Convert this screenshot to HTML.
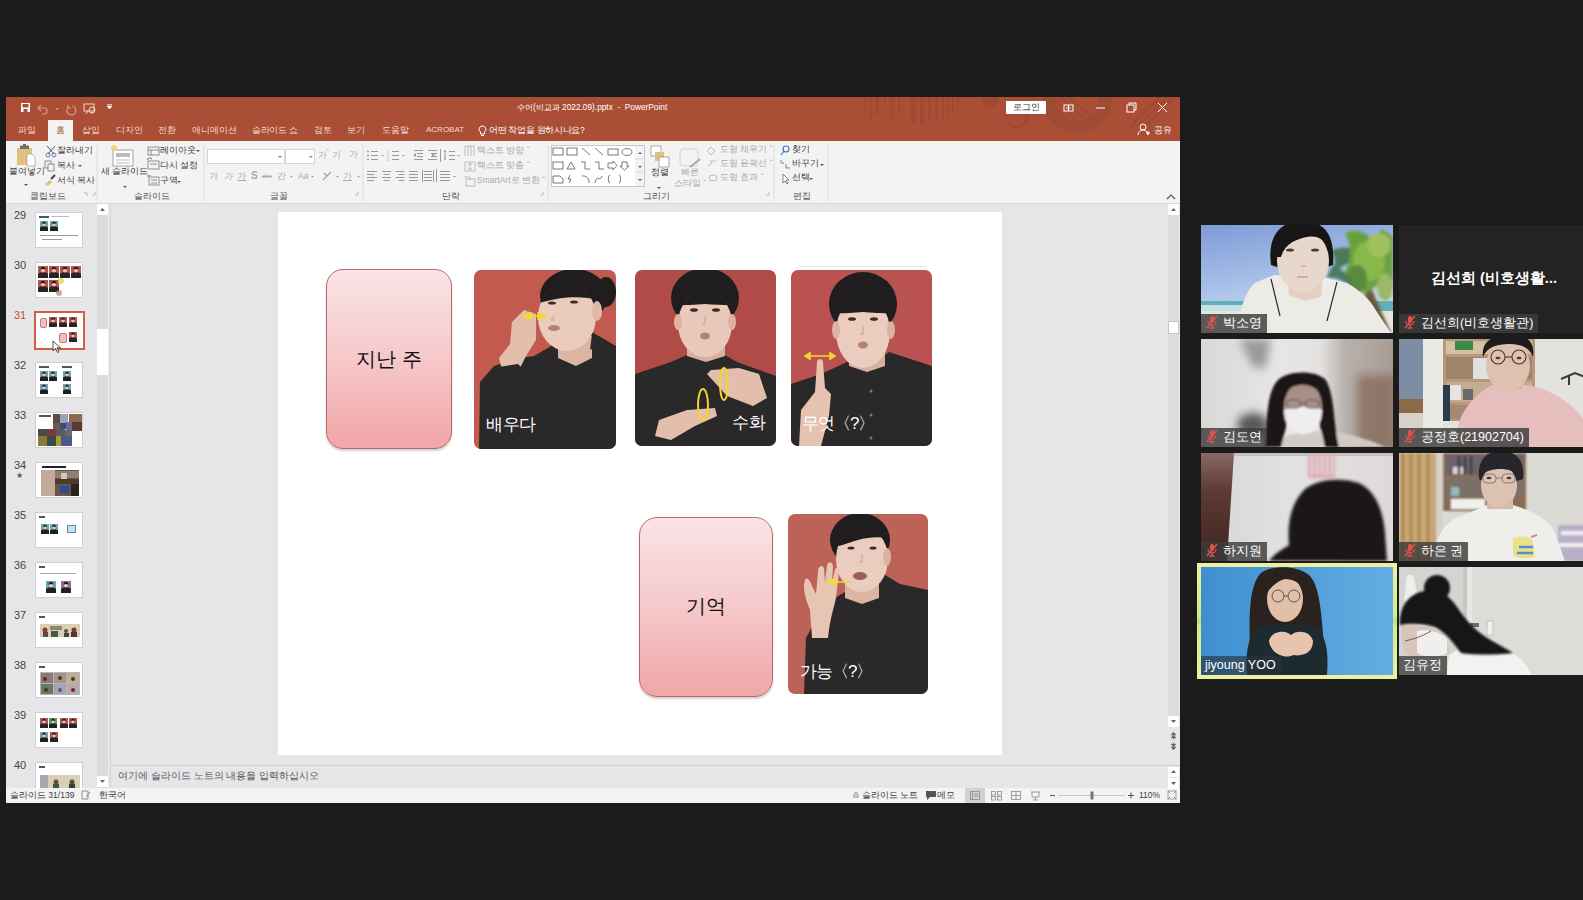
<!DOCTYPE html>
<html><head><meta charset="utf-8">
<style>
*{margin:0;padding:0;box-sizing:border-box}
html,body{width:1583px;height:900px;overflow:hidden;background:#1b1b1b;font-family:"Liberation Sans",sans-serif;position:relative}
.a{position:absolute}
.w{white-space:nowrap}
.tt{color:#fff;font-size:8.5px;line-height:12px}
.tab{color:#f5d9d0;font-size:8.5px;line-height:12px;top:124px}
.rt{color:#3c3c3c;font-size:8.5px;line-height:11px}
.rg{color:#a9a9a9;font-size:8.5px;line-height:11px}
.lbl{color:#505050;font-size:8.5px;line-height:11px;top:191px}
.sep{top:145px;width:1px;height:55px;background:#dadada}
.tn{color:#444;font-size:11px;line-height:12px}
.th{left:35px;width:48px;height:36px;background:#fff;border:1px solid #d0d0d0;overflow:hidden}
.st{color:#3c3c3c;font-size:8.5px;line-height:12px;top:789px}
.tile{width:192px;height:108px;overflow:hidden}
.nm{position:absolute;left:0;bottom:0;height:19px;background:rgba(48,48,48,.8);color:#fff;font-size:12.5px;line-height:19px;white-space:nowrap;padding:0 5px 0 4px}
.mic{display:inline-block;width:14px;height:14px;vertical-align:-2px;margin-right:4px}
</style></head><body>
<svg width="0" height="0" style="position:absolute">
  <symbol id="mpr" viewBox="0 0 16 20" preserveAspectRatio="none"><rect width="16" height="20" fill="#b9524e"/><path d="M0 20 V13 L5 10.5 H11 L16 13 V20Z" fill="#262424"/><ellipse cx="8" cy="7" rx="3.4" ry="4" fill="#e6c4b4"/><path d="M4.4 6.5 C4 2 6 1.5 8 1.5 C10 1.5 12 2 11.6 6.5 C10 4.5 6 4.5 4.4 6.5Z" fill="#1f1d1d"/></symbol>
  <symbol id="mpb" viewBox="0 0 16 20" preserveAspectRatio="none"><rect width="16" height="20" fill="#6aa6b8"/><path d="M0 20 V13 L5 10.5 H11 L16 13 V20Z" fill="#1e2022"/><ellipse cx="8" cy="7" rx="3.4" ry="4" fill="#e6c4b4"/><path d="M4.4 6.5 C4 2 6 1.5 8 1.5 C10 1.5 12 2 11.6 6.5 C10 4.5 6 4.5 4.4 6.5Z" fill="#1f1d1d"/></symbol>
  <symbol id="mpg" viewBox="0 0 16 20" preserveAspectRatio="none"><rect width="16" height="20" fill="#5a9a5a"/><path d="M0 20 V13 L5 10.5 H11 L16 13 V20Z" fill="#1e2022"/><ellipse cx="8" cy="7" rx="3.4" ry="4" fill="#e6c4b4"/><path d="M4.4 6.5 C4 2 6 1.5 8 1.5 C10 1.5 12 2 11.6 6.5 C10 4.5 6 4.5 4.4 6.5Z" fill="#1f1d1d"/></symbol>
  <symbol id="mpp" viewBox="0 0 16 20" preserveAspectRatio="none"><rect width="16" height="20" fill="#8a70a8"/><path d="M0 20 V13 L5 10.5 H11 L16 13 V20Z" fill="#1e2022"/><ellipse cx="8" cy="7" rx="3.4" ry="4" fill="#e6c4b4"/><path d="M4.4 6.5 C4 2 6 1.5 8 1.5 C10 1.5 12 2 11.6 6.5 C10 4.5 6 4.5 4.4 6.5Z" fill="#1f1d1d"/></symbol>
</svg>

<!-- PowerPoint window -->
<div class="a" style="left:6px;top:97px;width:1174px;height:706px;background:#e6e6e8"></div>
<div class="a" id="titlebar" style="left:6px;top:97px;width:1174px;height:44px;background:#aa4f36;overflow:hidden">
  <svg class="a" style="left:0;top:0" width="1174" height="44">
    <g fill="#9f4a33" opacity="0.9">
      <rect x="858" y="0" width="3" height="14"/><rect x="864" y="0" width="2" height="22"/><rect x="870" y="0" width="3" height="18"/>
      <rect x="878" y="0" width="2" height="10"/><rect x="884" y="0" width="3" height="24"/><rect x="892" y="0" width="2" height="16"/>
      <rect x="905" y="0" width="5" height="26"/><rect x="914" y="0" width="4" height="28"/><rect x="922" y="0" width="3" height="22"/>
      <rect x="929" y="0" width="3" height="26"/><rect x="936" y="0" width="2" height="24"/><rect x="941" y="0" width="2" height="20"/>
      <rect x="946" y="0" width="2" height="16"/><rect x="951" y="0" width="2" height="12"/>
    </g>
    <circle cx="1071" cy="1" r="28.5" fill="none" stroke="#9f4a33" stroke-width="13"/>
    <circle cx="1011" cy="20" r="10" fill="none" stroke="#a14a33" stroke-width="3"/>
    <circle cx="984" cy="2" r="9" fill="#a14a33"/>
    <g stroke="#a14a33" stroke-width="2.5">
      <line x1="1048" y1="2" x2="1078" y2="30"/><line x1="1055" y1="0" x2="1086" y2="29"/><line x1="1063" y1="0" x2="1092" y2="26"/>
      <line x1="1154" y1="0" x2="1124" y2="30"/><line x1="1161" y1="0" x2="1131" y2="30"/><line x1="1168" y1="0" x2="1138" y2="30"/>
    </g>
    <!-- qat icons -->
    <g transform="translate(15,6)">
      <rect x="0" y="0" width="9" height="9" fill="#fff"/><rect x="1.5" y="1" width="6" height="3.5" fill="#aa4f36"/><rect x="2.5" y="6" width="4" height="3" fill="#aa4f36"/>
    </g>
    <path d="M35 8 l-3 3 l3 3 M32 11 h6 a3 3 0 0 1 0 6 h-2" fill="none" stroke="#d7968a" stroke-width="1.2"/>
    <path d="M49 11 l2 2 l2-2z" fill="#d7968a"/>
    <path d="M66 9 a4.5 4.5 0 1 1 -4 1.5 M62 8 v3 h3" fill="none" stroke="#d7968a" stroke-width="1.2"/>
    <g fill="none" stroke="#f0d6cf" stroke-width="1"><rect x="78" y="7" width="10" height="7"/><circle cx="86" cy="13" r="3"/><path d="M80 17 l2-3 M86 17 l-1-2"/></g>
    <path d="M101 9 h5 l-2.5 3z M101 7.5 h5" fill="#fff" stroke="#fff" stroke-width="0.6"/>
    <!-- window controls -->
    <rect x="1000" y="4" width="40" height="13" fill="#fff" rx="1"/>
    <g fill="none" stroke="#fff" stroke-width="1">
      <rect x="1058" y="8" width="9" height="6"/><path d="M1062.5 8 v6 M1060 11h5"/>
      <path d="M1090 11 h9"/>
      <rect x="1121" y="8" width="7" height="7"/><path d="M1123 8 v-2 h7 v7 h-2"/>
      <path d="M1152 6 l9 9 M1161 6 l-9 9"/>
      <circle cx="1137" cy="30" r="3"/><path d="M1132 38 a5 5 0 0 1 10 0 M1140 36 h4 M1142 34 v4"/>
    </g>
  </svg>
  <div class="a w" style="left:1000px;top:4px;width:40px;text-align:center;color:#333;font-size:8.5px;line-height:13px">로그인</div>
  <div class="a w tt" style="left:511px;top:4px;font-size:8.3px">수어(비교과 2022.09).pptx&nbsp; -&nbsp; PowerPoint</div>
  <div class="a w tt" style="left:1148px;top:27px">공유</div>
  <div class="a" style="left:42px;top:23px;width:25px;height:21px;background:#f3f3f3"></div>
  <div class="a w tab" style="left:12px;top:27px">파일</div>
  <div class="a w tab" style="left:50px;top:27px;color:#aa4f36">홈</div>
  <div class="a w tab" style="left:75.5px;top:27px">삽입</div>
  <div class="a w tab" style="left:110px;top:27px">디자인</div>
  <div class="a w tab" style="left:151.5px;top:27px">전환</div>
  <div class="a w tab" style="left:186px;top:27px">애니메이션</div>
  <div class="a w tab" style="left:246px;top:27px;letter-spacing:-0.3px">슬라이드 쇼</div>
  <div class="a w tab" style="left:307.5px;top:27px">검토</div>
  <div class="a w tab" style="left:341px;top:27px">보기</div>
  <div class="a w tab" style="left:376px;top:27px">도움말</div>
  <div class="a w tab" style="left:420px;top:27px;font-size:8px">ACROBAT</div>
  <svg class="a" style="left:472px;top:28px" width="9" height="11"><path d="M4.5 1 a3.3 3.3 0 0 1 2 6 v2 h-4 v-2 a3.3 3.3 0 0 1 2-6z M3 10.5h3" fill="none" stroke="#fff" stroke-width="1"/></svg>
  <div class="a w tab" style="left:483px;top:27px;color:#fff;letter-spacing:-0.3px">어떤 작업을 원하시나요?</div>
</div>
<div class="a" id="ribbon" style="left:6px;top:141px;width:1174px;height:63px;background:#f3f3f3;border-bottom:1px solid #d9d9d9"></div>
<div id="ribc">
  <svg class="a" style="left:0;top:141px" width="1180" height="62">
    <!-- paste -->
    <rect x="17" y="7" width="15" height="17" fill="#e2c07f"/><rect x="20" y="4.5" width="9" height="3.5" fill="#707070"/><rect x="23" y="3" width="3" height="2.5" fill="#707070"/>
    <path d="M27 13 h5 l3 3 v9 h-8z" fill="#fff" stroke="#9a9a9a" stroke-width="0.7"/>
    <path d="M24 43 l2 2 l2-2z" fill="#555"/>
    <!-- cut/copy/format -->
    <g fill="none" stroke="#4a72b8" stroke-width="0.9"><circle cx="48" cy="14" r="2"/><circle cx="54" cy="14" r="2"/></g><path d="M47 5 l7 8 M55 5 l-7 8" stroke="#555" stroke-width="1"/>
    <g fill="none" stroke="#777" stroke-width="0.8"><rect x="45" y="20" width="6" height="7"/><rect x="48" y="23" width="6" height="7" fill="#f3f3f3"/></g>
    <path d="M78 24 l2 2 l2-2z" fill="#555"/>
    <path d="M45 43 l5-4 l2 2 l-4 4z" fill="#e2c07f"/><path d="M51 38 l4-4" stroke="#444" stroke-width="2"/>
    <path d="M84 52 l3 0 l0 3" fill="none" stroke="#999" stroke-width="0.6"/>
    <!-- new slide -->
    <rect x="113" y="9" width="20" height="16" fill="#fff" stroke="#8a8a8a" stroke-width="0.8"/><rect x="116" y="12" width="14" height="4" fill="#bbb"/><path d="M116 19h14M116 22h14" stroke="#bbb" stroke-width="1"/>
    <circle cx="114" cy="7" r="3" fill="#f4d36a"/>
    <path d="M123 45 l2 2 l2-2z" fill="#555"/>
    <g fill="none" stroke="#777" stroke-width="0.8"><rect x="148" y="6" width="11" height="8"/><path d="M148 9h11M151 9v5"/>
    <rect x="148" y="20" width="11" height="8"/><path d="M150 23h7"/>
    <path d="M149 36h10v8h-10z M151 39h6 M151 42h6"/></g>
    <path d="M147 19 a3 3 0 0 1 5 -1" stroke="#4a72b8" fill="none" stroke-width="1"/>
    <rect x="147" y="34" width="4" height="2" fill="#e2a050"/>
    <path d="M196 9 l2 2 l2-2z M177 40 l2 2 l2-2z" fill="#555"/>
    <!-- font boxes -->
    <rect x="207.5" y="8.5" width="77" height="14" fill="#fff" stroke="#d5d5d5"/><rect x="285.5" y="8.5" width="29" height="14" fill="#fff" stroke="#d5d5d5"/>
    <path d="M278 15 l2 2 l2-2z M309 15 l2 2 l2-2z" fill="#888"/>
    <path d="M204 4 v56 M363 4 v56 M548 4 v56 M774 4 v56 M828 4 v56 M97 4 v56" stroke="#dcdcdc" stroke-width="1"/>
    <path d="M1167 58 l4-4 l4 4" fill="none" stroke="#555" stroke-width="1.2"/>
    <!-- paragraph icons -->
    <g stroke="#9a9a9a" stroke-width="1" fill="none">
      <path d="M371 10.5h7 M371 14.5h7 M371 18.5h7"/>
      <path d="M392 10.5h7 M392 14.5h7 M392 18.5h7"/>
      <path d="M414 9.5h9 M417 12.5h6 M417 15.5h6 M414 18.5h9 M428 9.5h9 M431 12.5h6 M431 15.5h6 M428 18.5h9"/>
      <path d="M449 10.5h6 M449 14.5h6 M449 18.5h6 M445 9v10"/>
      <path d="M367 30.5h10 M367 33.5h7 M367 36.5h10 M367 39.5h7"/>
      <path d="M382 30.5h9 M383.5 33.5h6 M382 36.5h9 M383.5 39.5h6"/>
      <path d="M395.5 30.5h9 M398.5 33.5h6 M395.5 36.5h9 M398.5 39.5h6"/>
      <path d="M409 30.5h9 M409 33.5h9 M409 36.5h9 M409 39.5h9"/>
      <path d="M424 30.5h8 M424 33.5h8 M424 36.5h8 M424 39.5h8 M422.5 29v12 M433.5 29v12"/>
      <path d="M440 30.5h10 M440 33.5h10 M440 36.5h10 M440 39.5h10"/>
      <path d="M436.5 28v13 M440.5 8v13"/>
    </g>
    <g fill="#9a9a9a"><circle cx="368" cy="10.5" r="1"/><circle cx="368" cy="14.5" r="1"/><circle cx="368" cy="18.5" r="1"/>
      <text x="387" y="12" font-size="3.5">1</text><text x="387" y="16" font-size="3.5">2</text><text x="387" y="20" font-size="3.5">3</text>
      <path d="M413 14 l3-2v4z M435 14 l-3-2v4z M444 11 l1-2 l1 2z M444 17 l1 2 l1-2z"/>
      <path d="M381 14l1.5 1.5l1.5-1.5z M402 14l1.5 1.5l1.5-1.5z M457 14l1.5 1.5l1.5-1.5z M453 35l1.5 1.5l1.5-1.5z"/>
    </g>
    <g fill="none" stroke="#b0b0b0" stroke-width="0.8">
      <path d="M465 5v10 M468 5v10 M471 5v10 M474 5 v10 M465 5h10"/>
      <rect x="465" y="21" width="10" height="9"/><path d="M470 22v7 M468 24l2-2l2 2 M468 27l2 2l2-2"/>
      <rect x="466" y="38" width="9" height="7"/><path d="M464 36h6v3"/>
    </g>
    <!-- shapes gallery -->
    <rect x="551.5" y="4.5" width="93" height="41" fill="#fff" stroke="#c8c8c8"/>
    <rect x="635" y="5" width="9" height="40" fill="#f3f3f3"/><path d="M635 18h9 M635 31h9" stroke="#ddd"/>
    <g fill="none" stroke="#555" stroke-width="0.8">
      <rect x="553" y="7" width="10" height="7"/><rect x="567" y="7" width="10" height="7"/><path d="M582 7 l8 7 M595 7 l8 7"/><rect x="608" y="8" width="10" height="6"/><ellipse cx="627" cy="11" rx="5" ry="3.5"/>
      <rect x="553" y="21" width="10" height="7"/><path d="M567 28 l4-7 l4 7z M581 21h4v7h5 M595 21h4v7h5 M608 22h5v-2l4 4.5l-4 4.5v-2h-5z M622 21h5v4h2l-4.5 4l-4.5-4h2z"/>
      <path d="M553 42 v-7 h7 l3 3 v4z M570 34 l-2 4 l3 0 l-2 4 M582 35 a6 6 0 0 1 7 7 M595 42 c2-10 5 0 7-7 M610 34 c-2 0 -1 4 -2 4 c1 0 0 4 2 4 M619 34 c2 0 1 4 2 4 c-1 0 0 4 -2 4"/>
    </g>
    <path d="M638 13 l2-2 l2 2z M638 25 l2 2 l2-2z M638 38 l2 2 l2-2z" fill="#666"/>
    <!-- arrange -->
    <rect x="651" y="5" width="10" height="10" fill="#fff" stroke="#888" stroke-width="0.7"/><rect x="655" y="11" width="9" height="9" fill="#e2c07f"/><rect x="659" y="16" width="10" height="10" fill="#fff" stroke="#888" stroke-width="0.7"/>
    <path d="M657 46 l2 2 l2-2z" fill="#555"/>
    <rect x="680" y="8" width="18" height="17" rx="3" fill="#f4f2f6" stroke="#ccc" stroke-width="0.8"/><path d="M690 26 l10-8" stroke="#aaa" stroke-width="2"/>
    <g fill="none" stroke="#aaa" stroke-width="0.8"><path d="M711 6 l4 4 l-4 4 l-4-4z M710 20 h6 M708 26 l4-5 M709 37 a4 3 0 1 0 8 0 a4 3 0 1 0 -8 0"/></g>
    <!-- editing -->
    <g fill="none" stroke="#3a6fc4" stroke-width="1.1"><circle cx="786" cy="8" r="3"/><path d="M784 10 l-3 4"/></g>
    <path d="M781 19 v3 h3 M786 23 v4 h4" fill="none" stroke="#3a6fc4" stroke-width="0.8"/>
    <path d="M783 33 v9 l2-2 l2 3 l1-1 l-2-3 h3z" fill="#fff" stroke="#555" stroke-width="0.7"/>
    <path d="M820 23 l2 2 l2-2z M809 37 l2 2 l2-2z" fill="#555"/>
    <path d="M92 54 h3 v-3 M355 54 h3 v-3 M540 54 h3 v-3 M766 54 h3 v-3" fill="none" stroke="#aaa" stroke-width="0.7"/>
  </svg>
  <div class="a w rt" style="left:9px;top:166px">붙여넣기</div>
  <div class="a w rt" style="left:57px;top:145px">잘라내기</div>
  <div class="a w rt" style="left:57px;top:160px">복사</div>
  <div class="a w rt" style="left:57px;top:175px">서식 복사</div>
  <div class="a w rt" style="left:101px;top:166px">새 슬라이드</div>
  <div class="a w rt" style="left:160px;top:145px">레이아웃</div>
  <div class="a w rt" style="left:160px;top:160px">다시 설정</div>
  <div class="a w rt" style="left:160px;top:175px">구역</div>
  <div class="a w rg" style="left:318px;top:150px">가</div><div class="a w rg" style="left:326px;top:146px;font-size:6px">^</div>
  <div class="a w rg" style="left:332px;top:150px">가</div><div class="a w rg" style="left:340px;top:147px;font-size:6px">ˇ</div>
  <div class="a w rg" style="left:349px;top:149px">가</div>
  <div class="a w rg" style="left:209px;top:171px">가</div>
  <div class="a w rg" style="left:224px;top:171px;font-style:italic">가</div>
  <div class="a w rg" style="left:237px;top:171px;text-decoration:underline">가</div>
  <div class="a w rg" style="left:251px;top:170px;font-weight:bold;font-size:10px">S</div>
  <div class="a w rg" style="left:262px;top:171px;font-size:6px;text-decoration:line-through">abc</div>
  <div class="a w rg" style="left:277px;top:171px">간</div>
  <div class="a w rg" style="left:298px;top:171px">Aa</div>
  <div class="a w rg" style="left:343px;top:171px;text-decoration:underline">가</div>
  <svg class="a" style="left:200px;top:141px" width="170" height="62">
    <path d="M318 30 v11 M345.5 8 v13" stroke="#dcdcdc"/>
    <path d="M90 35l1.5 1.5l1.5-1.5z M111 35l1.5 1.5l1.5-1.5z M136 35l1.5 1.5l1.5-1.5z M157 35l1.5 1.5l1.5-1.5z" fill="#9a9a9a"/>
    <path d="M123 39 l8-8 M124 32 l3 3" stroke="#a0a0a0" stroke-width="1.2" fill="none"/>
  </svg>
  <svg class="a" style="left:0;top:141px" width="0" height="0"></svg>
  <div class="a w rg" style="left:477px;top:145px">텍스트 방향 ˇ</div>
  <div class="a w rg" style="left:477px;top:160px">텍스트 맞춤 ˇ</div>
  <div class="a w rg" style="left:477px;top:175px">SmartArt로 변환 ˇ</div>
  <div class="a w rt" style="left:651px;top:167px">정렬</div>
  <div class="a w rg" style="left:681px;top:167px">빠른</div>
  <div class="a w rg" style="left:674px;top:178px">스타일 ˇ</div>
  <div class="a w rg" style="left:720px;top:144px">도형 채우기 ˇ</div>
  <div class="a w rg" style="left:720px;top:158px">도형 윤곽선 ˇ</div>
  <div class="a w rg" style="left:720px;top:172px">도형 효과 ˇ</div>
  <div class="a w rt" style="left:792px;top:144px">찾기</div>
  <div class="a w rt" style="left:792px;top:158px">바꾸기</div>
  <div class="a w rt" style="left:792px;top:172px">선택</div>
  <div class="a w lbl" style="left:30px">클립보드</div>
  <div class="a w lbl" style="left:134px">슬라이드</div>
  <div class="a w lbl" style="left:270px">글꼴</div>
  <div class="a w lbl" style="left:442px">단락</div>
  <div class="a w lbl" style="left:643px">그리기</div>
  <div class="a w lbl" style="left:793px">편집</div>
</div>

<!-- thumbnails pane -->
<div class="a" id="thumbs" style="left:6px;top:204px;width:104px;height:584px;background:#e6e6e8"></div>
<div id="thc">
  <div class="a" style="left:97px;top:204px;width:11px;height:584px;background:#dcdcde"></div>
  <div class="a" style="left:97px;top:204px;width:11px;height:11px;background:#fff"></div>
  <svg class="a" style="left:97px;top:204px" width="11" height="11"><path d="M3 7 l2.5-3 l2.5 3z" fill="#666"/></svg>
  <div class="a" style="left:97px;top:329px;width:11px;height:46px;background:#fff"></div>
  <div class="a" style="left:97px;top:776px;width:11px;height:11px;background:#fff"></div>
  <svg class="a" style="left:97px;top:776px" width="11" height="11"><path d="M3 4 l2.5 3 l2.5-3z" fill="#666"/></svg>

  <div class="a tn" style="left:14px;top:209px">29</div>
  <div class="a th" style="top:212px">
    <div class="a" style="left:3px;top:3px;width:10px;height:1.5px;background:#555"></div>
    <div class="a" style="left:15px;top:3px;width:18px;height:1px;background:#bbb"></div>
    <svg class="a" style="left:4px;top:8px" width="8" height="10"><use href="#mpb"/></svg>
    <svg class="a" style="left:14px;top:8px" width="8" height="10"><use href="#mpb"/></svg>
    <div class="a" style="left:4px;top:22px;width:38px;height:1px;background:#999"></div>
    <div class="a" style="left:6px;top:26px;width:20px;height:1px;background:#999"></div>
  </div>
  <div class="a tn" style="left:14px;top:259px">30</div>
  <div class="a th" style="top:262px">
    <svg class="a" style="left:2px;top:3px" width="43" height="12"><use href="#mpr" x="0" width="10" height="12"/><use href="#mpr" x="11" width="10" height="12"/><use href="#mpr" x="22" width="10" height="12"/><use href="#mpr" x="33" width="10" height="12"/></svg>
    <svg class="a" style="left:2px;top:17px" width="43" height="12"><use href="#mpr" x="0" width="10" height="12"/><use href="#mpr" x="11" width="10" height="12"/></svg>
    <div class="a" style="left:22px;top:15px;width:6px;height:6px;border-radius:3px;background:#d4e060;opacity:.85"></div>
    <div class="a" style="left:20px;top:27px;width:6px;height:6px;border-radius:3px;background:#d08070;opacity:.7"></div>
  </div>
  <div class="a tn" style="left:14px;top:309px;color:#c5502f">31</div>
  <div class="a" style="left:34px;top:311px;width:51px;height:39px;border:2px solid #d0603f;background:#fff"></div>
  <div class="a" style="left:40px;top:318px;width:7px;height:10px;border-radius:2px;background:#f2bcc0;border:0.5px solid #c77"></div>
  <svg class="a" style="left:49px;top:317px" width="8" height="10"><use href="#mpr"/></svg>
  <svg class="a" style="left:59px;top:317px" width="8" height="10"><use href="#mpr"/></svg>
  <svg class="a" style="left:69px;top:317px" width="8" height="10"><use href="#mpr"/></svg>
  <div class="a" style="left:59px;top:333px;width:8px;height:10px;border-radius:2px;background:#f2bcc0;border:0.5px solid #c77"></div>
  <svg class="a" style="left:69px;top:332px" width="8" height="10"><use href="#mpr"/></svg>
  <svg class="a" style="left:52px;top:340px" width="9" height="13"><path d="M1 1 v10 l2.5-2.5 l2 4 l1.5-.7 l-2-4 h3.5z" fill="#fff" stroke="#222" stroke-width="0.8"/></svg>

  <div class="a tn" style="left:14px;top:359px">32</div>
  <div class="a th" style="top:362px">
    <div class="a" style="left:3px;top:3px;width:10px;height:1.5px;background:#555"></div><div class="a" style="left:26px;top:3px;width:10px;height:1.5px;background:#555"></div>
    <svg class="a" style="left:4px;top:8px" width="8" height="10"><use href="#mpb"/></svg>
    <svg class="a" style="left:13px;top:8px" width="8" height="10"><use href="#mpb"/></svg>
    <svg class="a" style="left:27px;top:8px" width="8" height="10"><use href="#mpb"/></svg>
    <svg class="a" style="left:4px;top:21px" width="8" height="10"><use href="#mpb"/></svg>
    <svg class="a" style="left:27px;top:21px" width="8" height="10"><use href="#mpb"/></svg>
  </div>
  <div class="a tn" style="left:14px;top:409px">33</div>
  <div class="a th" style="top:412px">
    <div class="a" style="left:3px;top:2px;width:12px;height:1.5px;background:#555"></div>
    <svg class="a" style="left:0;top:0" width="48" height="36">
      <rect x="17" y="1" width="7" height="9" fill="#5a4a48"/><rect x="24" y="1" width="8" height="9" fill="#9aa4b8"/><rect x="33" y="1" width="13" height="8" fill="#8a6a4a"/>
      <rect x="17" y="10" width="7" height="6" fill="#6a5a50"/><rect x="24" y="10" width="9" height="6" fill="#3a4a7a"/><rect x="30" y="9" width="6" height="9" fill="#6a6aa0"/><rect x="36" y="9" width="10" height="9" fill="#5a3a30"/>
      <rect x="2" y="16" width="9" height="7" fill="#4a4a48"/><rect x="11" y="16" width="9" height="7" fill="#7a3a3a"/><rect x="20" y="16" width="9" height="7" fill="#5a5a60"/><rect x="29" y="17" width="7" height="6" fill="#6a6a6a"/>
      <rect x="2" y="23" width="9" height="10" fill="#8a7a3a"/><rect x="11" y="23" width="9" height="10" fill="#3a4a4a"/><rect x="20" y="23" width="5" height="10" fill="#a8983a"/><rect x="25" y="23" width="11" height="10" fill="#4a5a8a"/>
    </svg>
  </div>
  <div class="a tn" style="left:14px;top:459px">34</div>
  <div class="a" style="left:16px;top:471px;color:#555;font-size:8px">★</div>
  <div class="a th" style="top:462px">
    <div class="a" style="left:6px;top:3px;width:24px;height:1.5px;background:#223"></div>
    <svg class="a" style="left:0;top:0" width="48" height="36">
      <rect x="5" y="7" width="38" height="26" fill="#6a5444"/>
      <rect x="5" y="7" width="14" height="26" fill="#c4a898"/>
      <rect x="19" y="8" width="24" height="7" fill="#8a8278"/>
      <rect x="25" y="10" width="6" height="6" fill="#d8c8a8"/>
      <rect x="19" y="16" width="24" height="5" fill="#4a3a30"/>
      <rect x="24" y="23" width="9" height="7" fill="#2a4a9a"/>
      <rect x="35" y="21" width="8" height="12" fill="#2a2420"/>
    </svg>
  </div>
  <div class="a tn" style="left:14px;top:509px">35</div>
  <div class="a th" style="top:512px">
    <div class="a" style="left:3px;top:3px;width:6px;height:1.5px;background:#555"></div>
    <svg class="a" style="left:5px;top:11px" width="8" height="10"><use href="#mpb"/></svg>
    <svg class="a" style="left:14px;top:11px" width="8" height="10"><use href="#mpb"/></svg>
    <div class="a" style="left:31px;top:12px;width:9px;height:8px;background:#bfe3f0;border:0.5px solid #68a"></div>
  </div>
  <div class="a tn" style="left:14px;top:559px">36</div>
  <div class="a th" style="top:562px">
    <div class="a" style="left:3px;top:3px;width:6px;height:1.5px;background:#555"></div>
    <div class="a" style="left:4px;top:10px;width:36px;height:1px;background:#aaa"></div>
    <svg class="a" style="left:10px;top:18px" width="10" height="12"><use href="#mpb"/></svg>
    <svg class="a" style="left:25px;top:18px" width="10" height="12"><use href="#mpp"/></svg>
  </div>
  <div class="a tn" style="left:14px;top:609px">37</div>
  <div class="a th" style="top:612px">
    <div class="a" style="left:3px;top:3px;width:6px;height:1.5px;background:#555"></div>
    <svg class="a" style="left:0;top:0" width="48" height="36">
      <rect x="4" y="11" width="40" height="13" fill="#d8d0b4"/>
      <circle cx="9" cy="17" r="2.5" fill="#8a3a30"/><rect x="7" y="19" width="5" height="5" fill="#5a4a3a"/>
      <rect x="14" y="13" width="12" height="4" fill="#6a6a58" opacity=".7"/><rect x="15" y="18" width="7" height="6" fill="#4a5a4a"/>
      <circle cx="30" cy="18" r="2" fill="#6a4a3a"/><rect x="28" y="20" width="5" height="4" fill="#3a4a3a"/>
      <circle cx="38" cy="17" r="2.5" fill="#7a3a30"/><rect x="35" y="19" width="6" height="5" fill="#4a3a3a"/>
    </svg>
  </div>
  <div class="a tn" style="left:14px;top:659px">38</div>
  <div class="a th" style="top:662px">
    <div class="a" style="left:3px;top:3px;width:6px;height:1.5px;background:#555"></div>
    <svg class="a" style="left:0;top:0" width="48" height="36">
      <rect x="4" y="9" width="40" height="23" fill="#b8b0c8"/>
      <rect x="5" y="10" width="12" height="10" fill="#8a7a70"/><rect x="18" y="10" width="12" height="10" fill="#a09880"/><rect x="31" y="10" width="12" height="10" fill="#c0b090"/>
      <rect x="5" y="21" width="12" height="10" fill="#6a7a5a"/><rect x="18" y="21" width="12" height="10" fill="#a8a0b8"/><rect x="31" y="21" width="12" height="10" fill="#b8a8a8"/>
      <circle cx="9" cy="16" r="2" fill="#5a2a2a"/><circle cx="24" cy="15" r="2" fill="#4a3a3a"/><circle cx="37" cy="16" r="2" fill="#3a3a3a"/>
      <circle cx="10" cy="27" r="2" fill="#3a3a2a"/><circle cx="24" cy="27" r="2" fill="#5a5a6a"/><circle cx="37" cy="27" r="2" fill="#6a2a3a"/>
    </svg>
  </div>
  <div class="a tn" style="left:14px;top:709px">39</div>
  <div class="a th" style="top:712px">
    <svg class="a" style="left:4px;top:5px" width="8" height="10"><use href="#mpr"/></svg>
    <svg class="a" style="left:13px;top:5px" width="8" height="10"><use href="#mpg"/></svg>
    <svg class="a" style="left:24px;top:5px" width="8" height="10"><use href="#mpr"/></svg>
    <svg class="a" style="left:33px;top:5px" width="8" height="10"><use href="#mpr"/></svg>
    <svg class="a" style="left:4px;top:19px" width="8" height="10"><use href="#mpb"/></svg>
    <svg class="a" style="left:14px;top:19px" width="8" height="10"><use href="#mpr"/></svg>
  </div>
  <div class="a tn" style="left:14px;top:759px">40</div>
  <div class="a th" style="top:762px;height:26px;border-bottom:none">
    <div class="a" style="left:3px;top:3px;width:6px;height:1.5px;background:#555"></div>
    <svg class="a" style="left:0;top:0" width="48" height="26">
      <rect x="4" y="12" width="40" height="14" fill="#d8d0b4"/>
      <rect x="4" y="12" width="8" height="14" fill="#a8a8b0"/>
      <circle cx="20" cy="19" r="2.5" fill="#6a4a3a"/><rect x="17" y="21" width="6" height="5" fill="#3a5a3a"/>
      <circle cx="36" cy="19" r="2.5" fill="#5a4a3a"/><rect x="33" y="21" width="6" height="5" fill="#3a3a3a"/>
    </svg>
  </div>
</div>
<!-- slide pane scrollbar -->
<div class="a" style="left:1168px;top:204px;width:11px;height:523px;background:#dcdcde"></div>
<div class="a" style="left:1168px;top:204px;width:11px;height:11px;background:#fff"></div>
<svg class="a" style="left:1168px;top:204px" width="11" height="11"><path d="M3 7 l2.5-3 l2.5 3z" fill="#666"/></svg>
<div class="a" style="left:1168px;top:321px;width:11px;height:13px;background:#fff;border:1px solid #c6c6c6"></div>
<div class="a" style="left:1168px;top:716px;width:11px;height:11px;background:#fff"></div>
<svg class="a" style="left:1168px;top:716px" width="11" height="40"><path d="M3 4 l2.5 3 l2.5-3z" fill="#666"/><path d="M3 19 l2.5-3 l2.5 3z M3 22 l2.5-3 l2.5 3z M5.5 22 v2 M3 28 l2.5 3 l2.5-3z M3 31 l2.5 3 l2.5-3z M5.5 26 v2" fill="#666" stroke="#666" stroke-width="0.5"/></svg>
<div class="a" style="left:1168px;top:767px;width:11px;height:10px;background:#fff"></div>
<div class="a" style="left:1168px;top:778px;width:11px;height:10px;background:#fff"></div>
<svg class="a" style="left:1168px;top:767px" width="11" height="21"><path d="M3 6 l2.5-3 l2.5 3z M3 15 l2.5 3 l2.5-3z" fill="#666"/></svg>

<!-- slide pane -->
<div class="a" style="left:110px;top:204px;width:1px;height:584px;background:#d6d6d8"></div>
<div class="a" id="slide" style="left:278px;top:212px;width:724px;height:543px;background:#fff"></div>
<div id="slc">
  <!-- pink boxes -->
  <div class="a" style="left:326px;top:269px;width:126px;height:180px;border-radius:17px;border:1px solid #b86a6a;background:linear-gradient(#fae4e6,#f6c8ca 50%,#f0a6a7);box-shadow:0 2px 2px rgba(0,0,0,.18)"></div>
  <div class="a w" style="left:326px;top:346px;width:126px;text-align:center;color:#111;font-size:19.5px;line-height:26px">지난 주</div>
  <div class="a" style="left:639px;top:517px;width:134px;height:180px;border-radius:18px;border:1px solid #b86a6a;background:linear-gradient(#fae4e6,#f6c8ca 50%,#f0a6a7);box-shadow:0 2px 2px rgba(0,0,0,.18)"></div>
  <div class="a w" style="left:639px;top:593px;width:134px;text-align:center;color:#111;font-size:19.5px;line-height:26px">기억</div>
  <div class="a" style="left:800px;top:266px;width:127px;height:1px;background:#e4e4ea"></div>

  <!-- photo 1 -->
  <svg class="a" style="left:474px;top:270px" width="142" height="179" viewBox="0 0 142 179">
    <defs><clipPath id="c1"><rect width="142" height="179" rx="7"/></clipPath></defs>
    <g clip-path="url(#c1)">
      <rect width="142" height="179" fill="#c25a4f"/>
      <path d="M84 72 L118 62 L142 76 L142 179 L5 179 L6 112 L20 96 L45 88 L60 86 Z" fill="#2a2828"/>
      <path d="M84 66 h34 v22 l-16 8 l-18-8z" fill="#dcb4a2"/>
      <path d="M118 64 l8 10 l-10 6z" fill="#2a2828"/>
      <ellipse cx="132" cy="22" rx="10" ry="15" fill="#1f1d1d"/>
      <ellipse cx="100" cy="26" rx="34" ry="27" fill="#1f1d1d"/>
      <ellipse cx="93" cy="47" rx="29" ry="34" fill="#ebcbbc"/>
      <ellipse cx="123" cy="41" rx="5" ry="10" fill="#e0b9a8"/>
      <clipPath id="h1"><path d="M0 0 H142 V36 C124 28 100 22 62 34 L0 34 Z"/></clipPath><ellipse cx="93" cy="47" rx="29" ry="34" fill="#1f1d1d" stroke="#1f1d1d" stroke-width="1" clip-path="url(#h1)"/>
      <ellipse cx="78" cy="33" rx="4" ry="1.6" fill="#3a2a28"/><ellipse cx="100" cy="32" rx="4" ry="1.6" fill="#3a2a28"/><path d="M80 46 l-3 4 h4" stroke="#c9a090" stroke-width="1" fill="none"/>
      <ellipse cx="80" cy="58" rx="6" ry="3" fill="#a86a66" opacity=".8"/>
      <path d="M28 100 L25 88 L36 74 L38 52 L50 40 L62 44 L62 70 L52 86 L44 102 Z" fill="#e4beac"/>
      <path d="M18 98 L44 94 L54 104 L34 126 L12 140 Z" fill="#2a2828"/>
      <path d="M49 46 l8-3 l0 6z M72 46 l-8-3 l0 6z M55 46 h11" fill="#f2dc2e" stroke="#f2dc2e" stroke-width="1.5"/>
    </g>
  </svg>
  <div class="a w" style="left:486px;top:414px;color:#fff;font-size:17px;line-height:22px;letter-spacing:-0.5px">배우다</div>

  <!-- photo 2 -->
  <svg class="a" style="left:635px;top:270px" width="141" height="176" viewBox="0 0 141 176">
    <defs><clipPath id="c2"><rect width="141" height="176" rx="7"/></clipPath></defs>
    <g clip-path="url(#c2)">
      <rect width="141" height="176" fill="#b04b47"/>
      <path d="M0 104 L36 92 L54 84 L88 84 L102 92 L141 106 L141 176 L0 176 Z" fill="#2a2828"/>
      <path d="M52 66 h38 v20 l-19 6 l-19-6z" fill="#d8b0a0"/>
      <ellipse cx="70" cy="28" rx="34" ry="30" fill="#1f1d1d"/>
      <ellipse cx="70" cy="54" rx="27" ry="33" fill="#e9c9ba"/>
      <ellipse cx="43" cy="52" rx="4" ry="8" fill="#dcb3a2"/><ellipse cx="97" cy="52" rx="4" ry="8" fill="#dcb3a2"/>
      <clipPath id="h2"><path d="M0 0 H141 V40 C110 34 90 36 70 34 C50 36 30 34 0 40 Z"/></clipPath><ellipse cx="70" cy="54" rx="27" ry="33" fill="#1f1d1d" stroke="#1f1d1d" stroke-width="1" clip-path="url(#h2)"/>
      <ellipse cx="59" cy="40" rx="4" ry="1.8" fill="#3a2a28"/><ellipse cx="81" cy="40" rx="4" ry="1.8" fill="#3a2a28"/><path d="M70 46 v8 h-3" stroke="#c9a090" stroke-width="1" fill="none"/>
      <ellipse cx="70" cy="66" rx="5" ry="3.5" fill="#a86a66" opacity=".8"/>
      <path d="M76 100 L104 98 L124 104 L132 128 L118 136 L92 126 L72 104 Z" fill="#e4beac"/>
      <path d="M24 150 L52 140 L80 138 L82 146 L60 156 L36 170 L20 166 Z" fill="#e4beac"/>
      <ellipse cx="89" cy="114" rx="4" ry="16" fill="none" stroke="#f0d628" stroke-width="2"/>
      <ellipse cx="68" cy="135" rx="5" ry="16" fill="none" stroke="#f0d628" stroke-width="2"/>
    </g>
  </svg>
  <div class="a w" style="left:732px;top:412px;color:#fff;font-size:17px;line-height:22px;letter-spacing:-0.5px">수화</div>

  <!-- photo 3 -->
  <svg class="a" style="left:791px;top:270px" width="141" height="176" viewBox="0 0 141 176">
    <defs><clipPath id="c3"><rect width="141" height="176" rx="7"/></clipPath></defs>
    <g clip-path="url(#c3)">
      <rect width="141" height="176" fill="#b95250"/>
      <path d="M0 114 L30 104 L56 92 L74 100 L98 82 L141 96 L141 176 L0 176 Z" fill="#2a2828"/>
      <path d="M58 76 h36 v20 l-18 6 l-18-6z" fill="#d8b0a0"/>
      <ellipse cx="72" cy="34" rx="34" ry="32" fill="#1f1d1d"/>
      <ellipse cx="72" cy="62" rx="27" ry="36" fill="#ebcdc0"/>
      <ellipse cx="45" cy="60" rx="4" ry="9" fill="#dcb3a2"/><ellipse cx="100" cy="60" rx="4" ry="9" fill="#dcb3a2"/>
      <clipPath id="h3"><path d="M0 0 H141 V50 C110 42 90 44 72 42 C54 44 34 42 0 50 Z"/></clipPath><ellipse cx="72" cy="62" rx="27" ry="36" fill="#1f1d1d" stroke="#1f1d1d" stroke-width="1" clip-path="url(#h3)"/>
      <ellipse cx="61" cy="49" rx="4" ry="1.8" fill="#3a2a28"/><ellipse cx="83" cy="49" rx="4" ry="1.8" fill="#3a2a28"/><path d="M72 55 v9 h-3" stroke="#c9a090" stroke-width="1" fill="none"/>
      <ellipse cx="72" cy="75" rx="5" ry="3.5" fill="#a86a66" opacity=".8"/>
      <path d="M24 122 L26 92 C26 88 32 88 32 92 L34 118 L40 124 L38 146 L30 176 L8 176 L10 140 Z" fill="#e6c2b0"/>
      <path d="M14 86 h30 M14 86 l5-3 v6z M44 86 l-5-3 v6z" fill="#f2d828" stroke="#f2d828" stroke-width="1.6"/>
      <circle cx="80" cy="121" r="1.5" fill="#777"/><circle cx="80" cy="145" r="1.5" fill="#777"/><circle cx="80" cy="168" r="1.5" fill="#777"/>
    </g>
  </svg>
  <div class="a w" style="left:802px;top:413px;color:#fff;font-size:17px;line-height:22px;letter-spacing:-1px">무엇〈?〉</div>

  <!-- photo 4 -->
  <svg class="a" style="left:788px;top:514px" width="140" height="180" viewBox="0 0 140 180">
    <defs><clipPath id="c4"><rect width="140" height="180" rx="7"/></clipPath></defs>
    <g clip-path="url(#c4)">
      <rect width="140" height="180" fill="#bd6257"/>
      <path d="M50 82 L92 58 L112 70 L140 76 L140 180 L16 180 L18 124 L34 94 Z" fill="#2a2828"/>
      <path d="M57 60 h34 v24 l-17 6 l-17-6z" fill="#dcb4a2"/>
      <ellipse cx="72" cy="26" rx="30" ry="27" fill="#1f1d1d"/>
      <ellipse cx="74" cy="45" rx="26" ry="33" fill="#ebcdc0"/>
      <ellipse cx="99" cy="43" rx="4" ry="9" fill="#dcb3a2"/>
      <clipPath id="h4"><path d="M0 0 H140 V34 C110 24 90 20 70 26 C56 30 46 36 0 40 Z"/></clipPath><ellipse cx="74" cy="45" rx="26" ry="33" fill="#1f1d1d" stroke="#1f1d1d" stroke-width="1" clip-path="url(#h4)"/>
      <ellipse cx="63" cy="34" rx="3.5" ry="1.6" fill="#3a2a28"/><ellipse cx="85" cy="34" rx="3.5" ry="1.6" fill="#3a2a28"/><path d="M74 40 v8 h-3" stroke="#c9a090" stroke-width="1" fill="none"/>
      <ellipse cx="72" cy="62" rx="7" ry="4" fill="#8a4a48" opacity=".85"/>
      <path d="M24 124 L22 96 C18 86 14 74 17 66 C19 62 22 66 24 72 L28 80 L30 58 C30 52 34 50 36 54 L37 68 L39 52 C40 47 44 47 45 52 L44 68 L47 56 C48 52 52 52 51 58 L48 84 C46 94 42 104 40 124 Z" fill="#e8c4b2"/>
      <path d="M40 68 h24 M40 68 l6-3 v6z" fill="#f2dc2e" stroke="#f2dc2e" stroke-width="1.6"/>
    </g>
  </svg>
  <div class="a w" style="left:800px;top:661px;color:#fff;font-size:17px;line-height:22px;letter-spacing:-1px">가능〈?〉</div>
</div>

<!-- notes -->
<div class="a" style="left:111px;top:765px;width:1069px;height:1px;background:#cfcfd1"></div>
<div class="a w" style="left:118px;top:769px;color:#555;font-size:10px;line-height:13px">여기에 슬라이드 노트의 내용을 입력하십시오</div>

<!-- status bar -->
<div class="a" id="status" style="left:6px;top:788px;width:1174px;height:15px;background:#f3f3f3"></div>
<div class="a w st" style="left:10px">슬라이드 31/139</div>
<svg class="a" style="left:81px;top:790px" width="10" height="10"><path d="M1 1h6v8h-6z M5 7 l4-5" fill="none" stroke="#777" stroke-width="0.8"/></svg>
<div class="a w st" style="left:99px">한국어</div>
<svg class="a" style="left:852px;top:791px" width="8" height="8"><path d="M1 6h6 M1 4h6 M2 3 l2-2 l2 2" fill="none" stroke="#777" stroke-width="0.8"/></svg>
<div class="a w st" style="left:862px">슬라이드 노트</div>
<svg class="a" style="left:926px;top:790px" width="10" height="10"><path d="M0 1h10v6h-6l-3 3v-3h-1z" fill="#555"/></svg>
<div class="a w st" style="left:937px">메모</div>
<div class="a" style="left:965px;top:788px;width:20px;height:15px;background:#d2d2d2"></div>
<svg class="a" style="left:965px;top:788px" width="200" height="15">
  <g fill="none" stroke="#8a8a8a" stroke-width="0.8">
    <rect x="5.5" y="3.5" width="9" height="8"/><path d="M7.5 3.5v8 M9 6h4 M9 8h4"/>
    <rect x="26.5" y="3.5" width="4" height="3.5"/><rect x="32.5" y="3.5" width="4" height="3.5"/><rect x="26.5" y="8.5" width="4" height="3.5"/><rect x="32.5" y="8.5" width="4" height="3.5"/>
    <rect x="46.5" y="3.5" width="9" height="8"/><path d="M46.5 7.5h9 M51 3.5v8"/>
    <path d="M66 4h9 M67 4v5h7v-5 M70.5 9v3 M68 12h5"/>
  </g>
  <path d="M85 7.5h5 M164 7.5" stroke="#666" stroke-width="1.2"/>
  <path d="M93 7.5h67" stroke="#aaa" stroke-width="0.6"/>
  <rect x="125.5" y="3.5" width="3" height="8" fill="#777"/>
  <path d="M163 7.5h6 M166 4.5v6" stroke="#555" stroke-width="1"/>
  <rect x="202" y="3" width="8" height="8" fill="none" stroke="#888" stroke-width="0.8"/>
</svg>
<div class="a w st" style="left:1139px">110%</div>
<svg class="a" style="left:1167px;top:790px" width="10" height="10"><rect x="1" y="1" width="8" height="8" fill="none" stroke="#888" stroke-width="0.8"/><path d="M1 1l2.5 2.5M9 1l-2.5 2.5M1 9l2.5-2.5M9 9l-2.5-2.5" stroke="#888" stroke-width="0.8"/></svg>

<!-- zoom tiles -->
<div class="a tile" style="left:1201px;top:225px">
  <svg width="192" height="108" class="a" style="left:0;top:0">
    <defs><linearGradient id="sky" x1="0" y1="0" x2="0.3" y2="1"><stop offset="0" stop-color="#7d9bd6"/><stop offset="0.55" stop-color="#a8c0e8"/><stop offset="1" stop-color="#d2def2"/></linearGradient>
    <filter id="b1" filterUnits="userSpaceOnUse" x="-30" y="-30" width="260" height="170"><feGaussianBlur stdDeviation="1.5"/></filter></defs>
    <rect width="192" height="108" fill="url(#sky)"/>
    <rect x="0" y="76" width="192" height="10" fill="#5fb0b8"/>
    <path d="M0 80 h60 v6 h-60z" fill="#dfeeee" opacity=".8"/>
    <rect x="0" y="86" width="192" height="22" fill="#e6e4de"/>
    <g filter="url(#b1)">
      <path d="M156 50 C164 72 172 92 180 108 L190 108 C182 90 172 68 164 48Z" fill="#6a5a3a"/>
      <path d="M130 26 C146 18 160 24 166 40 C150 34 140 38 128 56 C132 44 138 34 130 26Z" fill="#4a7a5a"/>
      <path d="M144 8 C156 2 170 8 174 20 L180 4 C186 8 192 10 192 14 V60 C184 56 174 60 164 70 C160 56 150 50 140 52 C150 40 152 24 144 8Z" fill="#6aa040"/>
      <ellipse cx="168" cy="36" rx="16" ry="20" fill="#88b848"/>
      <ellipse cx="178" cy="20" rx="12" ry="12" fill="#a0c060"/>
      <ellipse cx="156" cy="54" rx="10" ry="14" fill="#5a8a3a"/>
      <ellipse cx="184" cy="62" rx="8" ry="14" fill="#9aba6a"/>
      <path d="M132 40 C142 44 150 52 152 64 C144 56 136 52 126 52Z" fill="#4a7a60"/>
    </g>
    <path d="M35 108 C40 80 46 62 56 57 L73 50 L122 52 L146 58 C160 66 170 76 174 84 L190 108Z" fill="#ecebe5"/>
    <path d="M70 54 L79 91 M136 57 L126 96" stroke="#2a3030" stroke-width="1.2" fill="none"/>
    <path d="M86 50 L122 50 L120 72 L104 76 L88 70Z" fill="#e2d0c4"/>
    <path d="M70 40 C66 10 80 -4 101 -4 C124 -4 134 10 132 40 L126 42 L76 42Z" fill="#171516"/>
    <ellipse cx="102" cy="36" rx="26" ry="31" fill="#e8d8cc"/>
    <path d="M76 32 C74 10 86 0 104 0 C120 0 130 8 130 26 C124 14 116 10 106 12 C96 14 84 18 80 32Z" fill="#171516"/>
    <ellipse cx="89" cy="25" rx="4" ry="1.6" fill="#4a3a34"/><ellipse cx="114" cy="25" rx="4" ry="1.6" fill="#4a3a34"/>
    <path d="M100 41 h5" stroke="#c8a89a" stroke-width="1.2"/>
    <path d="M96 52 h11" stroke="#b89086" stroke-width="1.2"/>
  </svg>
  <div class="nm" style="background:rgba(60,60,60,.82)"><svg class="mic" viewBox="0 0 14 14"><rect x="5" y="1" width="4" height="7" rx="2" fill="#e0524a"/><path d="M3 6 a4 4 0 0 0 8 0 M7 10v3 M4.5 13h5" fill="none" stroke="#e0524a" stroke-width="1.3"/><path d="M2 13 L12 1" stroke="#e0524a" stroke-width="1.5"/></svg>박소영</div>
</div>
<div class="a tile" style="left:1399px;top:225px;background:#232323">
  <div class="a w" style="left:32px;top:43px;color:#fff;font-size:14.5px;font-weight:bold;line-height:20px">김선희 (비호생활...</div>
  <div class="nm" style="background:#383838"><svg class="mic" viewBox="0 0 14 14"><rect x="5" y="1" width="4" height="7" rx="2" fill="#e0524a"/><path d="M3 6 a4 4 0 0 0 8 0 M7 10v3 M4.5 13h5" fill="none" stroke="#e0524a" stroke-width="1.3"/><path d="M2 13 L12 1" stroke="#e0524a" stroke-width="1.5"/></svg>김선희(비호생활관)</div>
</div>
<div class="a tile" style="left:1201px;top:339px">
  <svg width="192" height="108" class="a" style="left:0;top:0">
    <defs>
      <linearGradient id="w3" x1="0" y1="0" x2="1" y2="0"><stop offset="0" stop-color="#d8d8d6"/><stop offset="0.4" stop-color="#e6e6e4"/><stop offset="0.62" stop-color="#e4e2e0"/><stop offset="0.75" stop-color="#b8b2ac"/><stop offset="1" stop-color="#a89c92"/></linearGradient>
      <filter id="b3" filterUnits="userSpaceOnUse" x="-30" y="-30" width="260" height="170"><feGaussianBlur stdDeviation="5"/></filter>
      <filter id="b3s" filterUnits="userSpaceOnUse" x="-30" y="-30" width="260" height="170"><feGaussianBlur stdDeviation="1.2"/></filter>
    </defs>
    <rect width="192" height="108" fill="url(#w3)"/>
    <rect x="156" y="36" width="40" height="76" fill="#8a7060" filter="url(#b3)" opacity=".85"/>
    <path d="M38 0 L70 0 L64 30 L52 28Z" fill="#9a9896" filter="url(#b3)"/>
    <ellipse cx="52" cy="86" rx="16" ry="12" fill="#5a5856" filter="url(#b3)"/>
    <g filter="url(#b3s)">
    <path d="M66 108 C80 94 110 90 140 94 C160 98 176 104 184 108Z" fill="#d2cac4"/>
    <path d="M64 108 C66 80 66 54 76 42 C84 32 112 30 124 40 C134 54 132 84 138 108 L124 108 C122 98 120 90 118 84 L86 84 C84 92 82 100 80 108Z" fill="#1a1818"/>
    <ellipse cx="102" cy="68" rx="19" ry="25" fill="#a89088"/>
    <path d="M82 58 C82 40 92 34 102 34 C114 34 122 40 122 58 C116 48 108 46 102 46 C94 46 86 48 82 58Z" fill="#1a1818"/>
    <path d="M83 71 C90 67 114 67 121 71 C121 85 114 95 102 95 C90 95 83 85 83 71Z" fill="#f0eeec"/>
    <g fill="none" stroke="#4a4444" stroke-width="0.9"><rect x="86" y="61" width="13" height="8" rx="3"/><rect x="105" y="61" width="13" height="8" rx="3"/><path d="M99 64h6"/></g>
    </g>
  </svg>
  <div class="nm" style="background:rgba(60,60,60,.82)"><svg class="mic" viewBox="0 0 14 14"><rect x="5" y="1" width="4" height="7" rx="2" fill="#e0524a"/><path d="M3 6 a4 4 0 0 0 8 0 M7 10v3 M4.5 13h5" fill="none" stroke="#e0524a" stroke-width="1.3"/><path d="M2 13 L12 1" stroke="#e0524a" stroke-width="1.5"/></svg>김도연</div>
</div>
<div class="a tile" style="left:1399px;top:339px">
  <svg width="192" height="108" class="a" style="left:0;top:0">
    <defs><filter id="b4" filterUnits="userSpaceOnUse" x="-30" y="-30" width="260" height="170"><feGaussianBlur stdDeviation="0.7"/></filter></defs>
    <rect width="192" height="108" fill="#e4e2de"/>
    <g filter="url(#b4)">
    <rect x="0" y="0" width="26" height="62" fill="#7d8da6"/>
    <rect x="0" y="60" width="26" height="14" fill="#8a6a4a"/>
    <rect x="0" y="74" width="26" height="34" fill="#d8d2c8"/>
    <rect x="24" y="0" width="20" height="92" fill="#ebe9e4"/>
    <rect x="44" y="0" width="92" height="82" fill="#b8987a"/>
    <rect x="47" y="2" width="86" height="13" fill="#d4c0a4"/>
    <rect x="47" y="18" width="86" height="22" fill="#a08468"/>
    <rect x="47" y="43" width="86" height="20" fill="#c4ac90"/>
    <rect x="47" y="66" width="86" height="14" fill="#a48a70"/>
    <rect x="56" y="2" width="18" height="9" fill="#3a8a44"/>
    <rect x="74" y="19" width="18" height="21" fill="#e0e2e2"/>
    <rect x="50" y="46" width="12" height="15" fill="#e4e4e0"/>
    <rect x="64" y="50" width="10" height="11" fill="#6a6a6a"/>
    <rect x="44" y="46" width="7" height="36" fill="#2a3a4a"/>
    <path d="M162 40 l14-6 l10 4 M170 36 v10" stroke="#3a3a3a" stroke-width="2" fill="none"/>
    </g>
    <path d="M55 108 C58 80 66 62 93 46 L128 46 C150 50 172 62 184 80 L188 108Z" fill="#e6bebd"/>
    <rect x="98" y="34" width="25" height="16" fill="#d8b19e"/>
    <ellipse cx="109" cy="27" rx="22" ry="25" fill="#e0c0ae"/>
    <path d="M84 18 C82 2 94 -4 110 -4 C128 -4 136 2 134 18 C130 8 122 5 110 5 C98 5 88 8 84 18Z" fill="#1e1c1c"/>
    <g fill="none" stroke="#3a3a3a" stroke-width="1.1"><circle cx="99" cy="18" r="7"/><circle cx="120" cy="18" r="7"/><path d="M106 18h7"/></g>
    <ellipse cx="99" cy="19" rx="2.5" ry="1.2" fill="#4a3a34"/><ellipse cx="120" cy="19" rx="2.5" ry="1.2" fill="#4a3a34"/>
  </svg>
  <div class="nm" style="background:rgba(60,60,60,.82)"><svg class="mic" viewBox="0 0 14 14"><rect x="5" y="1" width="4" height="7" rx="2" fill="#e0524a"/><path d="M3 6 a4 4 0 0 0 8 0 M7 10v3 M4.5 13h5" fill="none" stroke="#e0524a" stroke-width="1.3"/><path d="M2 13 L12 1" stroke="#e0524a" stroke-width="1.5"/></svg>공정호(21902704)</div>
</div>
<div class="a tile" style="left:1201px;top:453px">
  <svg width="192" height="108" class="a" style="left:0;top:0">
    <defs><filter id="b5" filterUnits="userSpaceOnUse" x="-30" y="-30" width="260" height="170"><feGaussianBlur stdDeviation="1.5"/></filter>
    <linearGradient id="g5" x1="0" y1="0" x2="0" y2="1"><stop offset="0" stop-color="#8a6a64"/><stop offset="0.35" stop-color="#5e3a34"/><stop offset="1" stop-color="#3e2420"/></linearGradient>
    <linearGradient id="w5" x1="0" y1="0" x2="1" y2="0"><stop offset="0" stop-color="#d4d6d6"/><stop offset="0.5" stop-color="#e2e2e2"/><stop offset="1" stop-color="#e0d8d8"/></linearGradient></defs>
    <rect width="192" height="108" fill="url(#w5)"/>
    <path d="M0 0 H33 L26 108 H0Z" fill="url(#g5)"/>
    <path d="M33 0 H192 V3 H33Z" fill="#c8c0be"/>
    <g filter="url(#b5)"><rect x="107" y="0" width="27" height="25" fill="#d8a8b0"/>
    <path d="M111 2v20 M116 2v20 M121 2v20 M126 2v20 M131 2 v20" stroke="#f4eaea" stroke-width="1.6"/></g>
    <path d="M68 108 C74 100 82 96 88 92 C86 70 90 50 104 36 C116 26 140 24 158 30 C174 38 182 56 184 80 L186 108Z" fill="#1c1413" filter="url(#b5)"/>
  </svg>
  <div class="nm" style="background:rgba(60,60,60,.82)"><svg class="mic" viewBox="0 0 14 14"><rect x="5" y="1" width="4" height="7" rx="2" fill="#e0524a"/><path d="M3 6 a4 4 0 0 0 8 0 M7 10v3 M4.5 13h5" fill="none" stroke="#e0524a" stroke-width="1.3"/><path d="M2 13 L12 1" stroke="#e0524a" stroke-width="1.5"/></svg>하지원</div>
</div>
<div class="a tile" style="left:1399px;top:453px">
  <svg width="192" height="108" class="a" style="left:0;top:0">
    <defs><filter id="b6" filterUnits="userSpaceOnUse" x="-30" y="-30" width="260" height="170"><feGaussianBlur stdDeviation="0.8"/></filter></defs>
    <rect width="192" height="108" fill="#dcdad4"/>
    <g filter="url(#b6)">
    <rect x="0" y="0" width="38" height="108" fill="#c9a674"/>
    <path d="M4 0v108 M12 0v108 M20 0v108 M29 0v108" stroke="#a9844e" stroke-width="2.5"/>
    <rect x="37" y="0" width="7" height="108" fill="#d6d2ca"/>
    <rect x="44" y="0" width="83" height="58" fill="#8a6c52"/>
    <rect x="47" y="2" width="77" height="20" fill="#6a6468"/>
    <rect x="47" y="25" width="77" height="19" fill="#7a7068"/>
    <rect x="52" y="46" width="34" height="10" fill="#f0f0ee"/>
    <rect x="54" y="14" width="10" height="7" fill="#d8dcd8"/>
    <rect x="52" y="34" width="8" height="9" fill="#9ab8b8"/>
    <path d="M60 3v18 M66 3v18 M72 3v18" stroke="#3a3a48" stroke-width="2.5"/>
    <rect x="159" y="72" width="33" height="36" fill="#b8b0c8"/>
    <path d="M162 80 h30 M160 92 h32" stroke="#f0eef2" stroke-width="4"/>
    </g>
    <path d="M34 108 C36 80 48 66 70 60 L88 52 L114 52 C134 58 150 66 156 80 L166 108Z" fill="#eeeeea"/>
    <path d="M114 86 c6 -4 14 -4 20 2 l2 16 c-8 2 -16 2 -22 -2z" fill="#e6e070" opacity=".8"/>
    <path d="M120 94 h14 M118 100 h16" stroke="#5a8ad8" stroke-width="2.5"/>
    <path d="M132 84 l6 -2" stroke="#e08090" stroke-width="2"/>
    <rect x="88" y="44" width="26" height="12" fill="#d8b8a6"/>
    <path d="M80 26 C78 6 88 -2 102 -2 C118 -2 126 8 124 26 L118 28 L84 28Z" fill="#26262c"/>
    <ellipse cx="100" cy="33" rx="18" ry="21" fill="#ddc2b2"/>
    <path d="M82 22 C82 10 92 4 102 4 C112 4 120 10 118 22 C112 14 92 14 82 22Z" fill="#26262c"/>
    <g fill="none" stroke="#777" stroke-width="0.9"><rect x="84" y="21" width="13" height="9" rx="4"/><rect x="103" y="21" width="13" height="9" rx="4"/><path d="M97 25h6"/></g>
    <ellipse cx="90" cy="25" rx="2.5" ry="1.2" fill="#4a3a34"/><ellipse cx="110" cy="25" rx="2.5" ry="1.2" fill="#4a3a34"/>
  </svg>
  <div class="nm" style="background:rgba(60,60,60,.82)"><svg class="mic" viewBox="0 0 14 14"><rect x="5" y="1" width="4" height="7" rx="2" fill="#e0524a"/><path d="M3 6 a4 4 0 0 0 8 0 M7 10v3 M4.5 13h5" fill="none" stroke="#e0524a" stroke-width="1.3"/><path d="M2 13 L12 1" stroke="#e0524a" stroke-width="1.5"/></svg>하은 권</div>
</div>
<div class="a" style="left:1197px;top:563px;width:200px;height:116px;background:linear-gradient(#eef0a0,#d6ec8a 45%,#b6e27a 50%,#d6ec8a 55%,#eef0a0)"></div>
<div class="a tile" style="left:1201px;top:567px">
  <svg width="192" height="108" class="a" style="left:0;top:0">
    <defs><linearGradient id="bl" x1="0" y1="0" x2="1" y2="0"><stop offset="0" stop-color="#3f8fd0"/><stop offset="1" stop-color="#62ade2"/></linearGradient></defs>
    <rect width="192" height="108" fill="url(#bl)"/>
    <path d="M50 108 C48 60 46 20 60 6 C70 -2 96 -2 108 8 C122 22 120 60 126 108Z" fill="#2a221e"/>
    <path d="M46 108 C44 80 48 64 64 58 L108 58 C124 62 128 80 126 108Z" fill="#1d2b30"/>
    <ellipse cx="84" cy="32" rx="18" ry="23" fill="#e2c0a8"/>
    <path d="M66 26 C66 8 78 4 86 4 C98 4 104 14 104 24 C100 16 92 12 84 12 C76 14 70 20 66 26Z" fill="#2a221e"/>
    <g fill="none" stroke="#555" stroke-width="1"><circle cx="77" cy="29" r="6"/><circle cx="93" cy="29" r="6"/><path d="M83 29h4"/></g>
    <path d="M68 74 C70 64 84 62 90 68 C96 62 110 64 112 74 C112 84 104 90 92 88 C86 92 70 88 68 74Z" fill="#e6c4ae"/>
  </svg>
  <div class="nm" style="background:rgba(40,50,60,.65)">jiyoung YOO</div>
</div>
<div class="a tile" style="left:1399px;top:567px">
  <svg width="192" height="108" class="a" style="left:0;top:0">
    <defs><filter id="b8" filterUnits="userSpaceOnUse" x="-30" y="-30" width="260" height="170"><feGaussianBlur stdDeviation="1.2"/></filter></defs>
    <rect width="192" height="108" fill="#dcdcd8"/>
    <rect x="0" y="0" width="66" height="108" fill="#d4d4d0"/>
    <rect x="64" y="0" width="4" height="108" fill="#c6c6c2"/>
    <rect x="68" y="0" width="5" height="108" fill="#e6e6e2"/>
    <path d="M5 34 L8 8 L14 8 L20 34 Z" fill="#eeeeec"/>
    <rect x="71" y="56" width="9" height="4" fill="#6a6a66"/>
    <rect x="88" y="54" width="6" height="14" fill="#f0f0ee" stroke="#aaa" stroke-width="0.6"/>
    <path d="M47 108 L50 88 C60 80 80 76 100 80 C118 86 128 96 132 108Z" fill="#f2f2f0"/>
    <g filter="url(#b8)">
    <circle cx="38" cy="21" r="13" fill="#161414"/>
    <path d="M1 58 C0 40 10 26 26 24 C40 22 50 28 58 40 C66 52 76 64 90 72 C100 78 108 82 114 86 C96 88 76 88 62 86 C54 76 48 66 36 60 C24 56 10 56 1 58Z" fill="#181616"/>
    </g>
    <path d="M3 60 C14 56 28 58 38 62 C46 68 50 76 50 86 C40 92 16 92 6 86 C3 78 2 68 3 60Z" fill="#d8c4b8"/>
    <path d="M18 64 C28 62 40 64 48 72 L48 86 C40 91 26 91 18 86 Z" fill="#f0efed"/>
    <path d="M6 74 c8 -2 16 -4 26 -10" stroke="#555" stroke-width="0.9" fill="none"/>
  </svg>
  <div class="nm" style="background:rgba(60,60,60,.78)">김유정</div>
</div>
</body></html>
